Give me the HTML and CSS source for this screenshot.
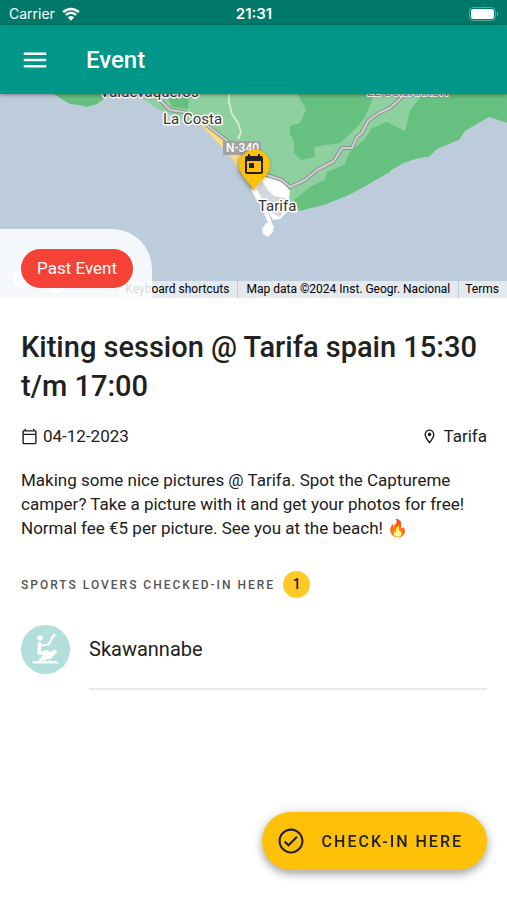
FILE: index.html
```html
<!DOCTYPE html>
<html lang="en">
  <head>
    <meta charset="UTF-8" />
    <meta name="viewport" content="width=device-width, initial-scale=1.0" />
    <title>Event</title>
    <link rel="stylesheet" href="styles.css">
  </head>
  <body>
    <div class="status-bar">
      <div class="status-left">
        <span>Carrier</span>
        <svg class="wifi" viewBox="0 0 18 14" aria-hidden="true">
          <path d="M1.2 5.2a11.2 11.2 0 0 1 15.6 0" />
          <path d="M3.9 8a7.3 7.3 0 0 1 10.2 0" />
          <path class="wifi-dot" d="M9 13.8 5.9 10.5a4.5 4.5 0 0 1 6.2 0z" />
        </svg>
      </div>
      <span class="clock">21:31</span>
      <div class="status-right">
        <svg class="battery" viewBox="0 0 30 14" aria-hidden="true">
          <rect x="0.5" y="0.5" width="26" height="13" rx="4" fill="none" stroke="#fff" stroke-opacity="0.35" />
          <rect x="2" y="2" width="23" height="10" rx="2.5" fill="#fff" />
          <path d="M28 4.5q2 2.5 0 5z" fill="#fff" fill-opacity="0.5" />
        </svg>
      </div>
    </div>

    <header class="app-bar">
      <button class="menu-button" type="button" aria-label="Menu">
        <svg viewBox="0 0 24 24" aria-hidden="true"><path d="M3 18h18v-2H3v2zm0-5h18v-2H3v2zm0-7v2h18V6H3z" /></svg>
      </button>
      <h1>Event</h1>
    </header>

    <main>
      <section class="map" aria-label="Map">
        <svg class="map-canvas" viewBox="0 94 507 204" preserveAspectRatio="xMidYMid slice">
          <!-- land -->
          <path fill="#66c080" d="M54 94l9 6 7 4 9 1 8 2 10-3 7-5 8-5z" />
          <path fill="#8fd0a0" d="M137 94l7 6 16 10 18 8 22 7 20 16 20 28 20 30 20 10 24 2 203-88V94z" />
          <path fill="#66c080" d="M166 94l6 13 16 2 1-10 12-5z" />
          <path fill="#66c080" d="M297 93l9 17-6 13-10 3v7l4 9v11l7 7 14-3-1-10 13-2 13-2 17-16 8-10 10-24z" />
          <path fill="#66c080" d="M424 93l-14 17-5 21-18-9-15 6-8 12-14 12-6 13-17 7-2 8-15 7-16 13 6 11 24-6 23-9 17-9 26-15 14-9 13-4 12-2 8-8 22-9 6-9 24-14 18 6V93z" />
          <path fill="#bdccda" d="M300 211l24-6 23-9 17-9 26-15 1-2 13-7 8-3 8-2 9-1 8-8 22-9 6-9 24-14 18 6V240H290z" />
          <path fill="#fbdc83" d="M199 123l10 4 12 9 10 9 16 14 4 26-6-8-8-9-7-13-10-10z" />
          <!-- town and island -->
          <path fill="#fff" d="M264 177l8 1 10 3 8 10-1 9 3 7-12 12-7 1-6-10-9-8-7-12z" />
          <path fill="#d5d8da" d="M262 181l6 9 6 6 12 2 3 5-9 14-10-5-9-11-6-10z" />
          <path class="causeway" d="M255 190l8 15 7 18-2 6" />
          <path fill="#fff" d="M266 223l8 2-1 7-5 5-5-3-1-5z" />
          <!-- roads -->
          <path class="trail" d="M229 94v8l3 12 6 9 3 9-3 7" />
          <path class="road-edge" d="M150 91l9 8 11 11 14 2 13 6 20 15 13 10 20 16 17 16 15 5 8 7 15-7 12-10 17-9 8-13h10l5-11 5-4 6-12 11-8 11-5 12-11 5-5" />
          <path class="road" d="M150 91l9 8 11 11 14 2 13 6 20 15 13 10 20 16 17 16 15 5 8 7 15-7 12-10 17-9 8-13h10l5-11 5-4 6-12 11-8 11-5 12-11 5-5" />
          <rect x="223" y="141" width="38" height="14" fill="#a3a3a3" />
          <text class="road-sign" x="226" y="152">N-340</text>
          <text class="place" x="100" y="97">Valdevaqueros</text>
          <text class="place" x="163" y="124">La Costa</text>
          <text class="place" x="258" y="211">Tarifa</text>
          <text class="area" x="367" y="96">EL GUIJARRÓN</text>
          <text class="watermark" x="12" y="287">Google</text>
          <!-- event marker -->
          <path class="pin" d="M254 191c-3-8-15-15-15-26a15.500 15.500 0 0 1 31 0c0 11-13 18-16 26z" />
          <path fill="#212121" transform="translate(242 153)" d="M19 3h-1V1h-2v2H8V1H6v2H5c-1.110 0-1.990.9-1.990 2L3 19c0 1.100.89 2 2 2h14c1.100 0 2-.9 2-2V5c0-1.100-.9-2-2-2zm0 16H5V8h14v11zM7 10h5v5H7z" />
        </svg>
        <div class="map-credits">
          <button type="button">Keyboard shortcuts</button>
          <span>Map data ©2024 Inst. Geogr. Nacional</span>
          <a href="#terms">Terms</a>
        </div>
        <div class="event-state"><span class="chip">Past Event</span></div>
      </section>

      <section class="event">
        <h2>Kiting session @ Tarifa spain 15:30 t/m 17:00</h2>
        <div class="event-meta">
          <span class="meta-item">
            <svg viewBox="0 0 24 24" aria-hidden="true"><path d="M20 3h-1V1h-2v2H7V1H5v2H4c-1.100 0-2 .9-2 2v16c0 1.100.9 2 2 2h16c1.100 0 2-.9 2-2V5c0-1.100-.9-2-2-2zm0 18H4V10h16v11zm0-13H4V5h16v3z" /></svg>
            04-12-2023
          </span>
          <span class="meta-item">
            <svg viewBox="0 0 24 24" aria-hidden="true"><path d="M12 2C8.130 2 5 5.130 5 9c0 5.250 7 13 7 13s7-7.750 7-13c0-3.870-3.130-7-7-7zM7 9c0-2.760 2.240-5 5-5s5 2.240 5 5c0 2.880-2.880 7.190-5 9.880C9.920 16.210 7 11.850 7 9z" /><circle cx="12" cy="9" r="2.5" /></svg>
            Tarifa
          </span>
        </div>
        <p class="description">Making some nice pictures @ Tarifa. Spot the Captureme camper? Take a picture with it and get your photos for free! Normal fee €5 per picture. See you at the beach! 🔥</p>

        <h3>Sports lovers checked-in here <span class="count">1</span></h3>
        <ul class="people">
          <li>
            <!-- kitesurfer -->
            <svg class="avatar" viewBox="0 0 49 49" aria-hidden="true">
              <circle cx="24.5" cy="24.5" r="24.5" fill="#b2dfdb" />
              <circle cx="19" cy="13" r="2.800" fill="#fff" />
              <g fill="none" stroke="#fff" stroke-linecap="round" stroke-linejoin="round">
                <path stroke-width="3.5" d="M18.500 19l-.5 8.500" />
                <path stroke-width="2" d="M19 18.500l2.500 2 6-1 3-5" />
                <path stroke-width="2.5" d="M30.500 13.500l3-3.500" />
                <path stroke-width="3" d="M18.500 28.500l8-2-4.500 6M25 30l9.500-3.500-5 5.500-10 2.500" />
              </g>
              <path fill="#fff" d="M11 36.500q3-1.500 5 0 3-2 5 0 3-2 5 0 3-2 5 0 4-1.500 7 2H12z" />
            </svg>
            <span class="person-name">Skawannabe</span>
          </li>
        </ul>
      </section>
    </main>

    <button class="check-in" type="button">
      <svg viewBox="0 0 24 24" aria-hidden="true"><path d="M12 2C6.480 2 2 6.480 2 12s4.480 10 10 10 10-4.480 10-10S17.520 2 12 2zm0 18.300c-4.580 0-8.300-3.720-8.300-8.300s3.720-8.300 8.300-8.300 8.300 3.720 8.300 8.300-3.720 8.300-8.300 8.300zm4.200-12.300L10 14.200l-2.500-2.500-1.200 1.200L10 16.600l7.400-7.400z" /></svg>
      Check-in here
    </button>
  </body>
</html>
```
FILE: styles.css
```css
* {
  box-sizing: border-box;
}
body {
  margin: 0;
  min-height: 100vh;
  font-family: Roboto, "Noto Color Emoji", sans-serif;
  font-size: 17px;
  line-height: 24px;
  color: #212121;
  background-color: #fff;
}
button {
  border: 0;
  font-family: inherit;
  cursor: pointer;
}
h1,
h2,
h3,
p,
ul {
  margin: 0;
  padding: 0;
}
/* Status bar */
.status-bar {
  display: grid;
  grid-template-columns: 1fr auto 1fr;
  align-items: center;
  height: 25px;
  padding: 2px 8px 0 9px;
  font-family: Inter, sans-serif;
  font-size: 14px;
  color: #fff;
  background-color: #00796b;
}
.status-left {
  display: flex;
  align-items: center;
  gap: 7px;
}
.wifi {
  width: 18px;
  height: 14px;
  fill: none;
  stroke: #fff;
  stroke-width: 2.4;
}
.wifi .wifi-dot {
  fill: #fff;
  stroke: none;
}
.clock {
  font-size: 15px;
  font-weight: 600;
}
.status-right {
  display: flex;
  justify-content: flex-end;
}
.battery {
  width: 30px;
  height: 14px;
}
/* App bar */
.app-bar {
  position: relative;
  z-index: 1;
  display: flex;
  align-items: center;
  gap: 36px;
  height: 69px;
  padding: 0 20px;
  color: #fff;
  background-color: #009688;
  box-shadow: 0 1px 4px rgba(0, 0, 0, 0.4);
}
.app-bar h1 {
  font-size: 24px;
  font-weight: 500;
}
.menu-button {
  width: 30px;
  height: 30px;
  padding: 0;
  background: none;
}
.menu-button svg {
  display: block;
  fill: #fff;
}
/* Map */
.map {
  position: relative;
  height: 204px;
  overflow: hidden;
  background-color: #bdccda;
}
.map-canvas {
  display: block;
  width: 100%;
  height: 100%;
}
.road-edge,
.road,
.trail,
.causeway {
  fill: none;
  stroke-linejoin: round;
}
.road-edge {
  stroke: #8b918e;
  stroke-width: 4;
}
.road {
  stroke: #d0d0d0;
  stroke-width: 2;
}
.trail {
  stroke: #d3e8cf;
  stroke-width: 2;
}
.causeway {
  stroke: #fff;
  stroke-width: 4;
}
.place {
  font-size: 15px;
  fill: #333;
  stroke: #fff;
  stroke-width: 3px;
  stroke-linejoin: round;
  paint-order: stroke;
}
.area {
  font-size: 12px;
  fill: #7b8a83;
  stroke: #fff;
  stroke-width: 2px;
  paint-order: stroke;
}
.watermark {
  font-size: 22px;
  fill: #bdccda;
  stroke: #fff;
  stroke-width: 2px;
}
.road-sign {
  font-size: 12px;
  font-weight: 500;
  fill: #fff;
}
.pin {
  fill: #ffc107;
  filter: drop-shadow(-1px 1px 2px rgba(0, 0, 0, 0.4));
}
.map-credits {
  position: absolute;
  right: 0;
  bottom: 0;
  display: flex;
  color: #000;
}
.map-credits > * {
  padding: 0 8px 0 6px;
  font-size: 12px;
  line-height: 17px;
  color: inherit;
  text-decoration: none;
  white-space: nowrap;
  background-color: rgba(245, 245, 245, 0.7);
}
.map-credits > * + * {
  border-left: 1px solid #c3ccd5;
}
.map-credits span {
  padding-left: 8px;
}
.event-state {
  position: absolute;
  left: 0;
  bottom: 0;
  padding: 20px 19px 10px 21px;
  border-top-right-radius: 40px;
  background-color: rgba(255, 255, 255, 0.85);
}
.chip {
  display: block;
  padding: 0 16px;
  border-radius: 20px;
  line-height: 39px;
  color: #fff;
  background-color: #f44336;
}
/* Event details */
.event {
  padding: 30px 20px 100px 21px;
}
.event h2 {
  font-size: 29px;
  font-weight: 500;
  line-height: 39px;
}
.event-meta {
  display: flex;
  justify-content: space-between;
  margin-top: 18px;
}
.meta-item {
  display: flex;
  align-items: center;
  gap: 5px;
}
.meta-item svg {
  width: 17px;
  height: 17px;
  fill: #212121;
}
.description {
  margin-top: 20px;
}
.event h3 {
  display: flex;
  align-items: center;
  gap: 8px;
  margin-top: 31px;
  font-size: 12px;
  font-weight: 500;
  letter-spacing: 2px;
  text-transform: uppercase;
  color: #555;
}
.count {
  width: 27px;
  border-radius: 50%;
  font-size: 14px;
  line-height: 27px;
  letter-spacing: normal;
  text-align: center;
  color: #212121;
  background-color: #ffca28;
}
.people {
  margin-top: 17px;
  list-style: none;
}
.people li {
  display: flex;
  gap: 19px;
}
.avatar {
  width: 49px;
  height: 49px;
  margin-top: 10px;
}
.person-name {
  flex: 1;
  padding-bottom: 4px;
  border-bottom: 2px solid #e8e8e8;
  font-size: 20px;
  line-height: 69px;
}
/* Floating button */
.check-in {
  position: fixed;
  right: 20px;
  bottom: 30px;
  display: flex;
  align-items: center;
  gap: 16px;
  height: 58px;
  padding: 0 24px 0 14px;
  border-radius: 29px;
  font-size: 16px;
  font-weight: 500;
  letter-spacing: 2px;
  text-transform: uppercase;
  color: #212121;
  background-color: #ffc107;
  box-shadow: 0 4px 8px rgba(0, 0, 0, 0.3), 0 1px 14px rgba(0, 0, 0, 0.12);
}
.check-in svg {
  width: 30px;
  height: 30px;
  fill: #212121;
}
```
